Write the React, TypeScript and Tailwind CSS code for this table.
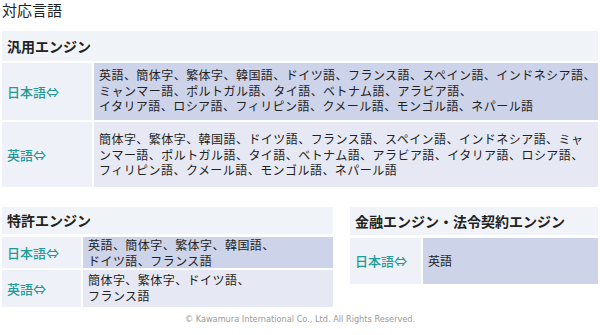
import React from "react";

const jp = { fontFamily: '"Noto Sans CJK JP", "Noto Sans", sans-serif' };

function Label({ children }: { children: React.ReactNode }) {
  return <span className="text-[13px] text-[#1f9a98] font-medium">{children}</span>;
}

export default function App() {
  return (
    <div className="w-[600px] h-[335px] bg-white text-[#222] flex flex-col" style={jp}>
      <div className="h-[21px] pl-[2px] text-[15px] leading-[20px] text-[#222]">対応言語</div>
      <div className="h-[10px]" />
      {/* 汎用エンジン */}
      <div className="ml-[2px] w-[596px] flex flex-col gap-[2px]">
        <div className="h-[30px] bg-[#f0f3f8] pl-[5px] flex items-center text-[14px] font-bold text-[#222]">汎用エンジン</div>
        <div className="h-[57px] flex gap-[2px]">
          <div className="w-[90px] bg-[#eef1f7] pl-[5px] flex items-center">
            <Label>日本語⇔</Label>
          </div>
          <div className="flex-1 bg-[#cdd3e8] pl-[5px] pt-[4px] text-[12px] leading-[15.5px] whitespace-nowrap tracking-[0.45px]">
            英語、簡体字、繁体字、韓国語、ドイツ語、フランス語、スペイン語、インドネシア語、<br />
            ミャンマー語、ポルトガル語、タイ語、ベトナム語、アラビア語、<br />
            イタリア語、ロシア語、フィリピン語、クメール語、モンゴル語、ネパール語
          </div>
        </div>
        <div className="h-[65px] flex gap-[2px]">
          <div className="w-[90px] bg-[#eef1f7] pl-[5px] flex items-center">
            <Label>英語⇔</Label>
          </div>
          <div className="flex-1 bg-[#e6e9f3] pl-[5px] pt-[9px] text-[12px] leading-[15.5px] whitespace-nowrap tracking-[0.45px]">
            簡体字、繁体字、韓国語、ドイツ語、フランス語、スペイン語、インドネシア語、ミャ<br />
            ンマー語、ポルトガル語、タイ語、ベトナム語、アラビア語、イタリア語、ロシア語、<br />
            フィリピン語、クメール語、モンゴル語、ネパール語
          </div>
        </div>
      </div>
      <div className="h-[20px]" />
      <div className="flex ml-[2px] gap-[17px]">
        {/* 特許エンジン */}
        <div className="w-[331px] flex flex-col">
          <div className="h-[27px] bg-[#f0f3f8] pl-[5px] flex items-center text-[14px] font-bold text-[#222]">特許エンジン</div>
          <div className="h-[3px]" />
          <div className="h-[31px] flex gap-[2px]">
            <div className="w-[79px] bg-[#eef1f7] pl-[5px] flex items-center">
              <Label>日本語⇔</Label>
            </div>
            <div className="flex-1 bg-[#cdd3e8] pl-[5px] text-[12px] leading-[15.5px] whitespace-nowrap tracking-[0.45px]">
              英語、簡体字、繁体字、韓国語、<br />
              ドイツ語、フランス語
            </div>
          </div>
          <div className="h-[2px]" />
          <div className="h-[37px] flex gap-[2px]">
            <div className="w-[79px] bg-[#eef1f7] pl-[5px] flex items-center">
              <Label>英語⇔</Label>
            </div>
            <div className="flex-1 bg-[#e6e9f3] pl-[5px] pt-[2px] text-[12px] leading-[16px] whitespace-nowrap tracking-[0.45px]">
              簡体字、繁体字、ドイツ語、<br />
              フランス語
            </div>
          </div>
        </div>
        {/* 金融エンジン */}
        <div className="w-[248px] flex flex-col">
          <div className="h-[28px] bg-[#f0f3f8] pl-[5px] flex items-center text-[14px] font-bold text-[#222]">金融エンジン・法令契約エンジン</div>
          <div className="h-[3px]" />
          <div className="h-[46px] flex gap-[2px]">
            <div className="w-[71px] bg-[#eef1f7] pl-[5px] flex items-center">
              <Label>日本語⇔</Label>
            </div>
            <div className="flex-1 bg-[#cdd3e8] pl-[5px] flex items-center text-[12px]">英語</div>
          </div>
        </div>
      </div>
      <div
        className="mt-[6px] text-center text-[8.2px] text-[#9a9a9a]"
        style={{ fontFamily: '"DejaVu Sans", Verdana, sans-serif' }}
      >
        © Kawamura International Co., Ltd. All Rights Reserved.
      </div>
    </div>
  );
}
